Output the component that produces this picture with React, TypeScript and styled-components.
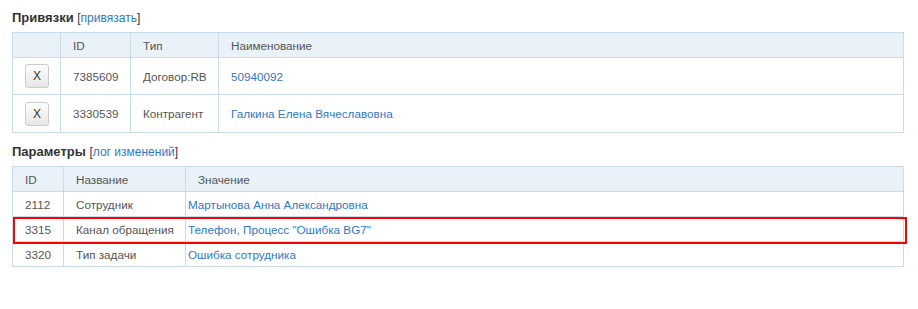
import styled, { createGlobalStyle } from "styled-components";

const GlobalStyle = createGlobalStyle`
  body {
    margin: 0;
    background: #fff;
    font-family: "Liberation Sans", Arial, sans-serif;
    font-size: 11.7px;
    color: #555;
  }
`;

const links = [
  { id: "7385609", type: "Договор:RB", name: "50940092" },
  { id: "3330539", type: "Контрагент", name: "Галкина Елена Вячеславовна" },
];

const params = [
  { id: "2112", title: "Сотрудник", value: "Мартынова Анна Александровна" },
  { id: "3315", title: "Канал обращения", value: 'Телефон, Процесс "Ошибка BG7"' },
  { id: "3320", title: "Тип задачи", value: "Ошибка сотрудника" },
];

const App = () => {
  return (
    <>
      <GlobalStyle />
      <Page>
        <Title>
          Привязки <Bracket>[<Link href="#">привязать</Link>]</Bracket>
        </Title>
        <Table>
          <thead>
            <tr>
              <Th width={48}></Th>
              <Th width={70}>ID</Th>
              <Th width={88}>Тип</Th>
              <Th>Наименование</Th>
            </tr>
          </thead>
          <tbody>
            {links.map((row, i) => (
              <LinkRow key={row.id} $h={i === 0 ? 37 : 38}>
                <Td>
                  <RemoveButton>X</RemoveButton>
                </Td>
                <Td>{row.id}</Td>
                <Td>{row.type}</Td>
                <Td>
                  <Link href="#">{row.name}</Link>
                </Td>
              </LinkRow>
            ))}
          </tbody>
        </Table>

        <Title $top={9}>
          Параметры <Bracket>[<Link href="#">лог изменений</Link>]</Bracket>
        </Title>
        <TableWrap>
          <Table>
            <thead>
              <tr>
                <Th width={51}>ID</Th>
                <Th width={122}>Название</Th>
                <Th>Значение</Th>
              </tr>
            </thead>
            <tbody>
              {params.map((row) => (
                <ParamRow key={row.id}>
                  <Td>{row.id}</Td>
                  <Td>{row.title}</Td>
                  <ValueTd>
                    <Link href="#">{row.value}</Link>
                  </ValueTd>
                </ParamRow>
              ))}
            </tbody>
          </Table>
          <Marker />
        </TableWrap>
      </Page>
    </>
  );
};

export default App;

const Page = styled.div`
  padding: 8px 15px 0 12px;
  width: 892px;
`;

const Title = styled.div<{ $top?: number }>`
  font-weight: bold;
  font-size: 13px;
  line-height: 20px;
  color: #333;
  margin-top: ${(p) => p.$top || 0}px;
  margin-bottom: 4px;
`;

const Bracket = styled.span`
  font-weight: normal;
  font-size: 12px;
`;

const Link = styled.a`
  color: #2f78cc;
  text-decoration: none;
`;

const Table = styled.table`
  width: 892px;
  table-layout: fixed;
  border-collapse: collapse;
  border: 1px solid #c8dde9;
`;

const Th = styled.th<{ width?: number }>`
  box-sizing: border-box;
  width: ${(p) => (p.width ? `${p.width}px` : "auto")};
  height: 25px;
  padding: 0 12px;
  background: #e9f1f9;
  border: 1px solid #c8dde9;
  text-align: left;
  font-weight: normal;
  color: #555;
`;

const Td = styled.td`
  padding: 0 12px;
  border: 1px solid #c8dde9;
  white-space: nowrap;
`;

const ValueTd = styled(Td)`
  padding-left: 2px;
`;

const LinkRow = styled.tr<{ $h: number }>`
  height: ${(p) => p.$h}px;
`;

const ParamRow = styled.tr`
  height: 25px;
`;

const RemoveButton = styled.button`
  display: block;
  width: 24px;
  height: 24px;
  padding: 0;
  border: 1px solid #ccc;
  border-radius: 3px;
  background: linear-gradient(#fff, #e6e6e6);
  font-family: "Liberation Sans", Arial, sans-serif;
  font-size: 12px;
  color: #333;
`;

const TableWrap = styled.div`
  position: relative;
`;

/* annotation frame drawn over the "Канал обращения" row */
const Marker = styled.div`
  position: absolute;
  left: 1px;
  right: -3px;
  top: 51px;
  height: 23px;
  border: 2px solid #f00;
  pointer-events: none;
`;
